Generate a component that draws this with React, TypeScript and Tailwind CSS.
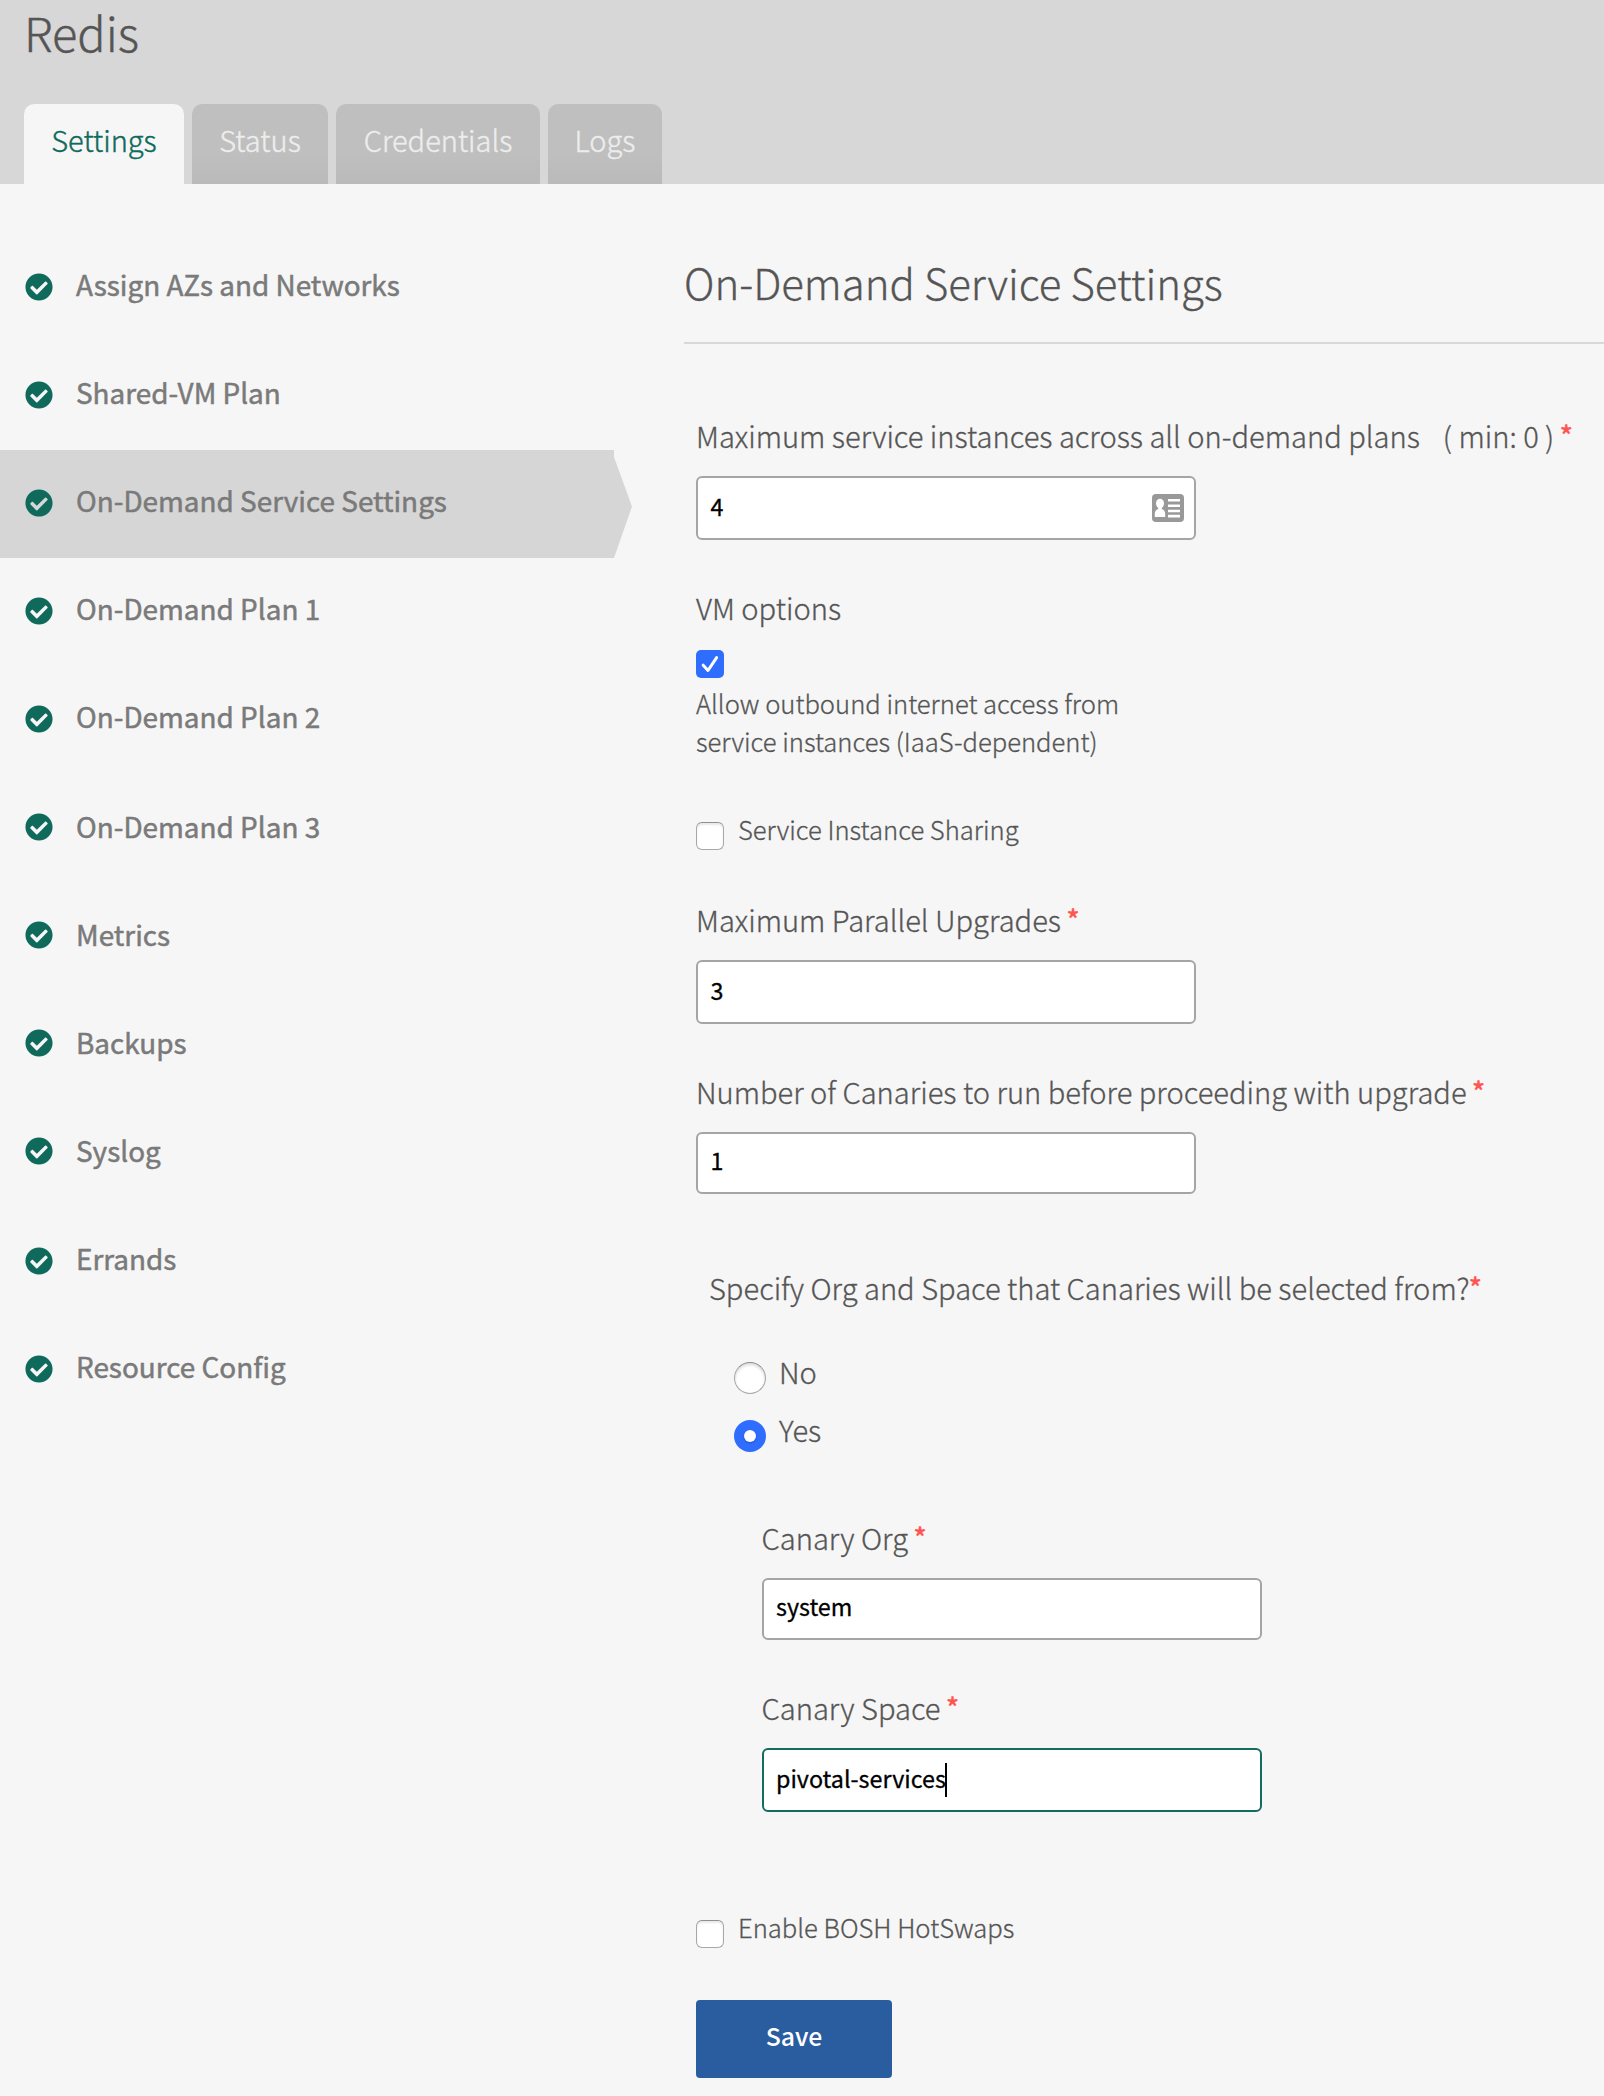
import type { ReactNode } from "react";
import { FaCheckCircle } from "react-icons/fa";

const NAV_ITEMS = [
  { label: "Assign AZs and Networks", row: "h-[108px]", icon: "mt-[5px]" },
  { label: "Shared-VM Plan", row: "h-[108px]", icon: "mt-[5px]" },
  { label: "On-Demand Service Settings", row: "h-[108px]", icon: "mt-[5px]" },
  { label: "On-Demand Plan 1", row: "h-[108px]", icon: "mt-[5px]" },
  { label: "On-Demand Plan 2", row: "h-[108px] mb-0.5", icon: "mt-[5px]" },
  { label: "On-Demand Plan 3", row: "h-[108px]", icon: "mt-px" },
  { label: "Metrics", row: "h-[108px]", icon: "mt-px" },
  { label: "Backups", row: "h-[108px]", icon: "mt-px" },
  { label: "Syslog", row: "h-[108px]", icon: "mt-px" },
  { label: "Errands", row: "h-[108px]", icon: "mt-[5px]" },
  { label: "Resource Config", row: "h-[108px]", icon: "mt-[5px]" },
];
const ACTIVE_NAV = "On-Demand Service Settings";

const TABS = [
  { label: "Settings", width: "w-40", active: true },
  { label: "Status", width: "w-[136px]", active: false },
  { label: "Credentials", width: "w-[204px]", active: false },
  { label: "Logs", width: "w-[114px]", active: false },
];

function Header() {
  return (
    <header className="flex h-[184px] flex-col justify-between bg-[#d7d7d7] pl-6">
      <h1 className="text-[47px] font-light leading-16 text-[#555] [-webkit-text-stroke:0.4px]">Redis</h1>
      <nav className="flex gap-2">
        {TABS.map((tab) => (
          <a
            key={tab.label}
            className={`${tab.width} h-20 rounded-t-[10px] pt-[15px] text-center text-[29px] font-light leading-10 [-webkit-text-stroke:0.4px] ${
              tab.active
                ? "bg-[#f6f6f6] text-[#0f6a5c]"
                : "bg-linear-to-b from-[#bfbfbf] from-60% to-[#bababa] text-[#ededed]"
            }`}
          >
            {tab.label}
          </a>
        ))}
      </nav>
    </header>
  );
}

function Sidebar() {
  return (
    <aside className="w-[614px] shrink-0 pt-[50px]">
      {NAV_ITEMS.map((item) => {
        const active = item.label === ACTIVE_NAV;
        return (
          <div
            key={item.label}
            className={`relative flex items-center pb-2 pl-[25px] ${item.row} ${active ? "bg-[#d6d6d6]" : ""}`}
          >
            <FaCheckCircle className={`size-7 shrink-0 text-[#0f6a5c] ${item.icon}`} />
            <span className="ml-[23px] text-[27.9px] leading-10 text-[#7a7a7a] [-webkit-text-stroke:0.5px]">
              {item.label}
            </span>
            {active && (
              <span className="absolute left-full top-[7px] h-[101px] w-[18px] bg-[#d6d6d6] [clip-path:polygon(0_0,100%_49%,0_100%)]" />
            )}
          </div>
        );
      })}
    </aside>
  );
}

function Star() {
  return <span className="relative -left-px -top-0.5 text-[27px] font-medium leading-none text-[#ff5450]">*</span>;
}

function Label({ children, className = "" }: { children: ReactNode; className?: string }) {
  return (
    <div
      className={`whitespace-nowrap text-[29.1px] font-light leading-10 [-webkit-text-stroke:0.3px] ${className}`}
    >
      {children}
    </div>
  );
}

function Field({
  value,
  height = "h-16 pb-0",
  border = "border-[#a5a5a5]",
  caret = false,
  icon,
}: {
  value: string;
  height?: string;
  border?: string;
  caret?: boolean;
  icon?: ReactNode;
}) {
  return (
    <div
      className={`mt-[21px] flex w-[500px] items-center rounded-[6px] border-2 bg-white pl-[12.5px] pr-[10px] ${height} ${border}`}
    >
      <span className="pb-1 text-[23.3px] leading-9 text-black [-webkit-text-stroke:0.3px]">{value}</span>
      {caret && <span className="-ml-px h-[34px] w-0.5 bg-black" />}
      {icon}
    </div>
  );
}

function ContactCardIcon() {
  return (
    <svg className="ml-auto h-7 w-8" viewBox="0 0 32 28">
      <rect width="32" height="28" rx="4" fill="#999" />
      <ellipse cx="8" cy="9.5" rx="4" ry="4.8" fill="#fff" />
      <path d="M6.2 12h3.6v3c2.200.8 3.400 2.600 3.400 4.600V23H2.800v-3.400c0-2 1.200-3.800 3.400-4.600z" fill="#fff" />
      <path d="M16 5h12v2.600H16zM16 10.500h12v2.600H16zM16 15.700h12v2.600H16zM16 20.800h12v2.600H16z" fill="#fff" />
    </svg>
  );
}

function Checkbox({ checked = false, className = "" }: { checked?: boolean; className?: string }) {
  if (checked) {
    return (
      <span className={`flex size-7 items-center justify-center rounded-[5px] bg-[#2f6dff] ${className}`}>
        <svg className="size-7" viewBox="0 0 28 28" fill="none">
          <path
            d="M7.200 15.200L12 20.500L20.600 7.600"
            stroke="#fff"
            strokeWidth="3"
            strokeLinecap="round"
            strokeLinejoin="round"
          />
        </svg>
      </span>
    );
  }
  return (
    <span
      className={`size-7 shrink-0 rounded-[6px] border border-[#a8a8a8] border-t-[#909090] bg-white shadow-[inset_0_2px_2px_rgba(0,0,0,0.09)] ${className}`}
    />
  );
}

function Radio({ checked = false }: { checked?: boolean }) {
  return checked ? (
    <span className="mt-[11px] flex size-8 items-center justify-center rounded-full bg-[#2f6dff]">
      <span className="size-3 rounded-full bg-white shadow-[0_1px_2px_rgba(0,0,0,0.25)]" />
    </span>
  ) : (
    <span className="mt-[11px] size-8 rounded-full border border-[#a8a8a8] border-t-[#8a8a8a] bg-white shadow-[inset_0_2px_3px_rgba(0,0,0,0.15)]" />
  );
}

function SettingsForm() {
  return (
    <main className="ml-[70px] min-w-0 flex-1 pt-[68px] text-[#555]">
      <h2 className="border-b-2 border-[#d8d8d8] pb-[30px] text-[41.9px] font-light leading-[60px] [-webkit-text-stroke:0.3px]">
        On-Demand Service Settings
      </h2>

      <div className="pl-3">
        <Label className="mt-[71px]">
          Maximum service instances across all on-demand plans
          <span className="ml-[23px]">( min: 0 )</span> <Star />
        </Label>
        <Field value="4" icon={<ContactCardIcon />} />

        <Label className="mt-[47px]">VM options</Label>
        <Checkbox checked className="mt-[23px]" />
        <p className="mt-1.5 w-[440px] text-[25.6px] font-light leading-[38px] [-webkit-text-stroke:0.3px]">
          Allow outbound internet access from service instances (IaaS-dependent)
        </p>

        <div className="mt-[50px] flex items-start">
          <Checkbox className="mt-3" />
          <span className="ml-3.5 text-[25.6px] font-light leading-[38px] [-webkit-text-stroke:0.3px]">
            Service Instance Sharing
          </span>
        </div>

        <Label className="mt-[49px]">
          Maximum Parallel Upgrades <Star />
        </Label>
        <Field value="3" />

        <Label className="mt-[47px]">
          Number of Canaries to run before proceeding with upgrade <Star />
        </Label>
        <Field value="1" height="h-[62px] pb-0.5" />

        <Label className="ml-[13px] mt-[73px]">
          Specify Org and Space that Canaries will be selected from?
          <Star />
        </Label>

        <div className="ml-[38px] mt-11 flex items-start gap-[13px]">
          <Radio />
          <Label>No</Label>
        </div>
        <div className="ml-[38px] mt-[15px] flex items-start gap-[13px]">
          <Radio checked />
          <Label>Yes</Label>
        </div>

        <div className="ml-[65.5px]">
          <Label className="mt-[65px]">
            Canary Org <Star />
          </Label>
          <Field value="system" height="h-[62px] pb-0.5" />
          <Label className="mt-[47px]">
            Canary Space <Star />
          </Label>
          <Field value="pivotal-services" border="border-[#146b60]" caret />
        </div>

        <div className="mt-24 flex items-start">
          <Checkbox className="mt-3" />
          <span className="ml-3.5 text-[25.6px] font-light leading-[38px] [-webkit-text-stroke:0.3px]">
            Enable BOSH HotSwaps
          </span>
        </div>

        <button className="mt-[52px] block h-[78px] w-[196px] rounded-[4px] bg-[#2a5ca0] pb-1.5 text-[24.8px] font-medium text-white">
          Save
        </button>
      </div>
    </main>
  );
}

export default function App() {
  return (
    <div className="h-[2096px] w-[1604px] overflow-hidden bg-[#f6f6f6] font-['Noto_Sans_CJK_SC',sans-serif]">
      <Header />
      <div className="flex">
        <Sidebar />
        <SettingsForm />
      </div>
    </div>
  );
}
